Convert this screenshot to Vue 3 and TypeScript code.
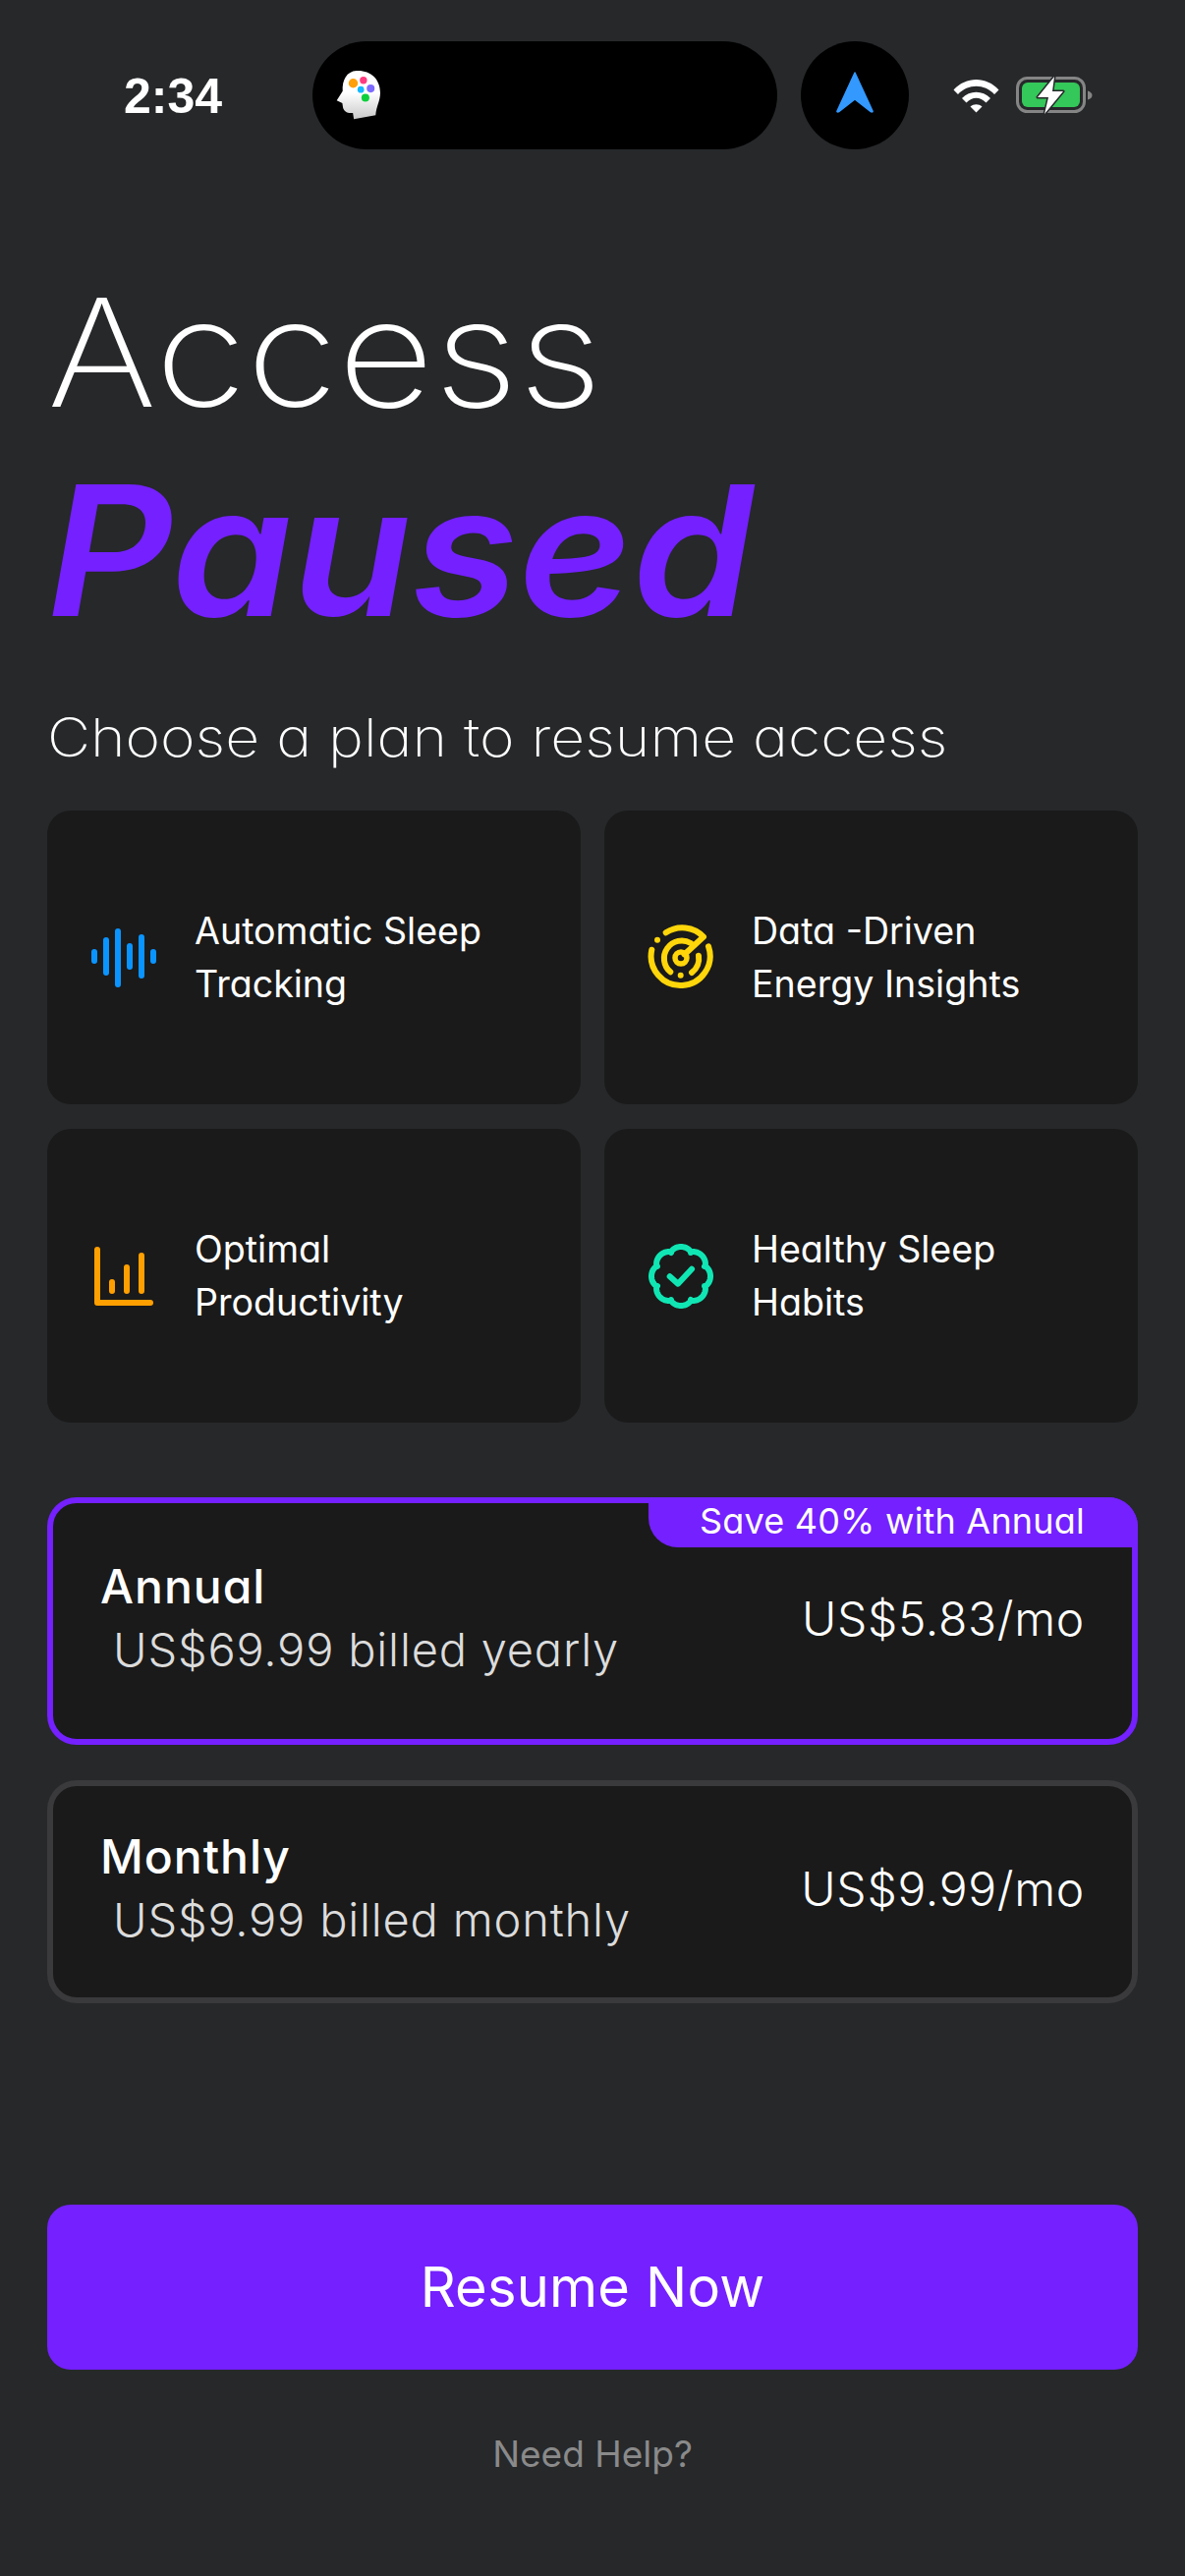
<script setup lang="ts">
const pts: string[] = []
for (let i = 0; i <= 320; i++) {
  const t = (i / 320) * Math.PI * 2
  const r = 26 + 4 * Math.pow(Math.abs(Math.cos(4 * t)), 0.6)
  pts.push(`${(36 + r * Math.sin(t)).toFixed(2)} ${(36 - r * Math.cos(t)).toFixed(2)}`)
}
const badgePath = 'M' + pts.join('L') + 'Z'
</script>

<template>
  <div class="screen">
    <header class="status">
      <span class="time">2:34</span>
      <div class="island">
        <svg class="head" width="47" height="52" viewBox="125 125 140 155">
          <defs>
            <linearGradient id="hg" x1="0" y1="0" x2="0" y2="1">
              <stop offset="0.45" stop-color="#ffffff" />
              <stop offset="1" stop-color="#c9c9c9" />
            </linearGradient>
          </defs>
          <path d="M190 128C232 126 262 152 262 195C262 220 250 235 248 263L182 275L179 256C162 258 152 252 149 240L147 226L130 218L148 190C146 156 160 130 190 128Z" fill="url(#hg)" />
          <circle cx="180" cy="166" r="14" fill="#ff9f0a" />
          <circle cx="211" cy="157" r="11" fill="#ff3b7f" />
          <circle cx="203" cy="185" r="10" fill="#14b8ff" />
          <circle cx="233" cy="182" r="12" fill="#7d6bff" />
          <circle cx="217" cy="210" r="12" fill="#0ccf3c" />
        </svg>
      </div>
      <div class="nav-dot">
        <svg width="40" height="44" viewBox="0 0 40 44">
          <path d="M20 2L38 41Q38.500 42.500 36 41.500L20 29L4 41.500Q1.500 42.500 2 41Z" fill="#3399ff" stroke="#3399ff" stroke-width="1.500" stroke-linejoin="round" />
        </svg>
      </div>
      <svg class="wifi" width="47" height="36" viewBox="0 0 47 36">
        <path d="M0.500 12.500C13 -1.500 34 -1.500 46.500 12.500L42 17C32 6 15 6 5 17Z" fill="#fff" />
        <path d="M9 21C17 12.500 30 12.500 38 21L33.500 25.500C27.500 19 19.500 19 13.500 25.500Z" fill="#fff" />
        <path d="M17.500 29.500C21 26.500 26 26.500 29.500 29.500L23.500 35.500Z" fill="#fff" />
      </svg>
      <svg class="battery" width="78" height="38" viewBox="0 0 78 38">
        <rect x="1.500" y="1.500" width="68" height="34" rx="10" fill="none" stroke="#858585" stroke-width="3" />
        <rect x="6" y="6" width="59" height="25" rx="6" fill="#34c759" />
        <path d="M73 14.500Q77.500 16 77.500 19Q77.500 22 73 23.500Z" fill="#858585" />
        <path d="M39 0L22 21H33L29 38L48 15H37Z" fill="#fff" stroke="#26282a" stroke-width="3" paint-order="stroke" stroke-linejoin="round" />
      </svg>
    </header>

    <main class="content">
      <h1 class="title-light">Access</h1>
      <h1 class="title-bold">Paused</h1>
      <p class="subtitle">Choose a plan to resume access</p>

      <section class="features">
        <div class="feature">
          <svg width="72" height="72" viewBox="0 0 72 72" fill="none" stroke="#0a94ff" stroke-width="6" stroke-linecap="round">
            <path d="M6 30V39M18 18V51M30 9V63M42 24V45M54 15V54M66 30V39" />
          </svg>
          <span>Automatic Sleep<br />Tracking</span>
        </div>
        <div class="feature">
          <svg width="72" height="72" viewBox="0 0 72 72" fill="none" stroke="#ffd60a" stroke-width="6" stroke-linecap="round" stroke-linejoin="round">
            <path d="M20.700 10.300A30 30 0 0 1 59 14.500L39.500 32.500" />
            <path d="M64 24.300A30 30 0 1 1 6.300 27.700" />
            <path d="M25.300 50.300A18 18 0 0 1 46 21" />
            <path d="M54 33.700A18 18 0 0 1 47 51" />
            <circle cx="36" cy="36" r="6" stroke-width="5.500" />
            <path d="M12 17.700H12.010M35.700 53.700H35.710" />
          </svg>
          <span>Data -Driven<br />Energy Insights</span>
        </div>
        <div class="feature">
          <svg width="72" height="72" viewBox="0 0 72 72" fill="none" stroke="#ff9f00" stroke-width="6" stroke-linecap="round" stroke-linejoin="round">
            <path d="M9 9V63H63M24 42V51M39 27V51M54 15V51" />
          </svg>
          <span>Optimal<br />Productivity</span>
        </div>
        <div class="feature">
          <svg width="72" height="72" viewBox="0 0 72 72" fill="none" stroke="#10e6b4" stroke-width="6" stroke-linecap="round" stroke-linejoin="round">
            <path :d="badgePath" />
            <path d="M24.700 36.300L33 43.700L47 28.700" />
          </svg>
          <span>Healthy Sleep<br />Habits</span>
        </div>
      </section>

      <section class="plans">
        <div class="plan plan-annual">
          <div class="ribbon">Save 40% with Annual</div>
          <div class="plan-info">
            <div class="plan-name">Annual</div>
            <div class="plan-billed">US$69.99 billed yearly</div>
          </div>
          <div class="plan-price">US$5.83/mo</div>
        </div>
        <div class="plan plan-monthly">
          <div class="plan-info">
            <div class="plan-name">Monthly</div>
            <div class="plan-billed">US$9.99 billed monthly</div>
          </div>
          <div class="plan-price">US$9.99/mo</div>
        </div>
      </section>

      <button class="resume" type="button">Resume Now</button>
      <div class="help">Need Help?</div>
    </main>
  </div>
</template>

<style>
html, body { margin: 0; background: #26282a; }
</style>

<style scoped>
.screen {
  width: 1206px;
  height: 2622px;
  overflow: hidden;
  background: #26282a;
  color: #fff;
  font-family: Inter, "Noto Sans", sans-serif;
  font-feature-settings: "cv11" 1;
}
.status {
  display: flex;
  align-items: center;
  height: 110px;
  padding: 42px 0 0 126px;
}
.time {
  width: 192px;
  font-family: "Liberation Sans", sans-serif;
  font-size: 50px;
  font-weight: 700;
  line-height: 1;
  margin-top: 2px;
}
.island {
  display: flex;
  align-items: center;
  width: 473px;
  height: 110px;
  padding-left: 23px;
  box-sizing: border-box;
  border-radius: 55px;
  background: #000;
}
.nav-dot {
  display: flex;
  align-items: center;
  justify-content: center;
  width: 110px;
  height: 110px;
  margin-left: 24px;
  border-radius: 50%;
  background: #000;
}
.nav-dot svg { margin-top: -6px; }
.wifi { margin-left: 45px; }
.battery { margin-left: 17px; }

.content { padding: 0 48px; }
.title-light {
  margin: 112px 0 0;
  font-size: 152px;
  font-weight: 200;
  line-height: 190px;
  transform: scaleX(1.118);
  transform-origin: left center;
}
.title-bold {
  margin: 14px 0 0;
  color: #7420ff;
  font-size: 184px;
  font-weight: 600;
  font-style: italic;
  line-height: 184px;
  transform: scaleX(1.075);
  transform-origin: left center;
}
.subtitle {
  margin: 65px 0 0;
  font-size: 54px;
  font-weight: 250;
  line-height: 68px;
  transform: scaleX(1.123);
  transform-origin: left center;
}
.features {
  display: grid;
  grid-template-columns: 543px 543px;
  grid-auto-rows: 299px;
  gap: 25px 24px;
  margin-top: 40px;
}
.feature {
  display: flex;
  align-items: center;
  gap: 36px;
  padding-left: 42px;
  border-radius: 24px;
  background: #1a1a1a;
  font-size: 37.600px;
  line-height: 54px;
}
.plans {
  display: flex;
  flex-direction: column;
  gap: 36px;
  margin-top: 76px;
}
.plan {
  position: relative;
  display: flex;
  align-items: center;
  justify-content: space-between;
  box-sizing: border-box;
  padding: 0 48px;
  border: 6px solid #3a3a3c;
  border-radius: 30px;
  background: #1a1a1a;
}
.plan-annual { height: 252px; border-color: #7420ff; }
.plan-monthly { height: 227px; }
.ribbon {
  position: absolute;
  top: -6px;
  right: -6px;
  width: 498px;
  height: 51px;
  box-sizing: border-box;
  padding-right: 54px;
  border-radius: 0 30px 0 30px;
  background: #7420ff;
  font-size: 36px;
  letter-spacing: 0.2px;
  line-height: 48px;
  text-align: right;
}
.plan-info { display: flex; flex-direction: column; margin-bottom: 7px; }
.plan-name {
  font-size: 48px;
  font-weight: 500;
  letter-spacing: 1px;
  line-height: 64px;
}
.plan-billed {
  margin-left: 13px;
  color: #dcdcdc;
  font-size: 47px;
  font-weight: 300;
  letter-spacing: 0.8px;
  line-height: 64px;
}
.plan-price {
  margin-bottom: 5px;
  font-size: 48px;
  font-weight: 300;
  letter-spacing: 0.7px;
  line-height: 60px;
}
.resume {
  display: block;
  width: 100%;
  height: 168px;
  margin-top: 205px;
  padding: 0;
  border: 0;
  border-radius: 24px;
  background: #7420ff;
  color: #fff;
  font: inherit;
  font-size: 56px;
  letter-spacing: 0.2px;
  font-feature-settings: inherit;
}
.help {
  margin-top: 62px;
  color: #8a8a8a;
  font-size: 37px;
  line-height: 48px;
  text-align: center;
}
</style>
